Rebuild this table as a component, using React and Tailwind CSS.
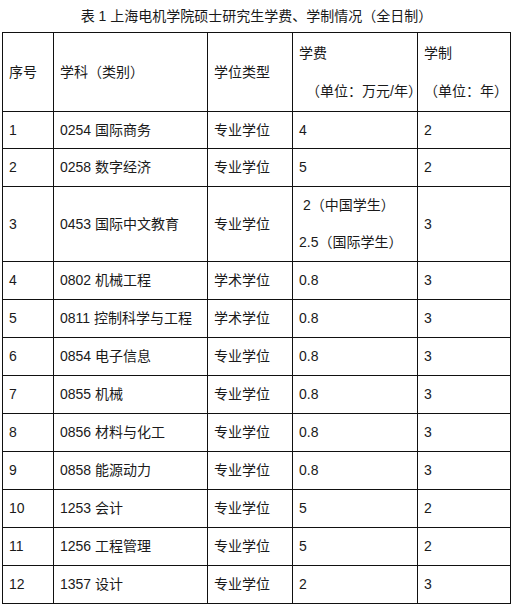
import React from "react";

const rows = [
  { no: "1", subject: "0254 国际商务", type: "专业学位", fee: ["4"], years: "2", h: "h-[37px]" },
  { no: "2", subject: "0258 数字经济", type: "专业学位", fee: ["5"], years: "2", h: "h-[38px]" },
  { no: "3", subject: "0453 国际中文教育", type: "专业学位", fee: ["\u00a02（中国学生）", "2.5（国际学生）"], years: "3", h: "h-[75px]" },
  { no: "4", subject: "0802 机械工程", type: "学术学位", fee: ["0.8"], years: "3", h: "h-[38px]" },
  { no: "5", subject: "0811 控制科学与工程", type: "学术学位", fee: ["0.8"], years: "3", h: "h-[38px]" },
  { no: "6", subject: "0854 电子信息", type: "专业学位", fee: ["0.8"], years: "3", h: "h-[38px]" },
  { no: "7", subject: "0855 机械", type: "专业学位", fee: ["0.8"], years: "3", h: "h-[38px]" },
  { no: "8", subject: "0856 材料与化工", type: "专业学位", fee: ["0.8"], years: "3", h: "h-[38px]" },
  { no: "9", subject: "0858 能源动力", type: "专业学位", fee: ["0.8"], years: "3", h: "h-[38px]" },
  { no: "10", subject: "1253 会计", type: "专业学位", fee: ["5"], years: "2", h: "h-[38px]" },
  { no: "11", subject: "1256 工程管理", type: "专业学位", fee: ["5"], years: "2", h: "h-[38px]" },
  { no: "12", subject: "1357 设计", type: "专业学位", fee: ["2"], years: "3", h: "h-[38px]" },
];

const Cell = ({ h, children }) => (
  <div className={`${h} border-l border-t border-[#111] pl-[6px] flex flex-col justify-center whitespace-nowrap`}>
    {children}
  </div>
);

export default function App() {
  return (
    <div className="w-[513px] h-[606px] bg-white text-[#1a1a1a] text-[14px] font-['Liberation_Sans','Noto_Sans_CJK_SC',sans-serif]">
      <h1 className="pt-[6px] h-[32px] leading-[20px] text-center text-[14px] font-normal">
        表 1 上海电机学院硕士研究生学费、学制情况（全日制）
      </h1>
      <div className="ml-[2px] w-[509px] grid grid-cols-[51px_154px_85px_125px_93px] border-r border-b border-[#111]">
        <Cell h="h-[79px]">序号</Cell>
        <Cell h="h-[79px]">学科（类别）</Cell>
        <Cell h="h-[79px]">学位类型</Cell>
        <Cell h="h-[79px]">
          <div className="h-[38px] flex items-center">学费</div>
          <div className="h-[38px] flex items-center pl-[7px]">（单位：万元/年）</div>
        </Cell>
        <Cell h="h-[79px]">
          <div className="h-[38px] flex items-center">学制</div>
          <div className="h-[38px] flex items-center">（单位：年）</div>
        </Cell>
        {rows.map((r) => (
          <React.Fragment key={r.no}>
            <Cell h={r.h}>{r.no}</Cell>
            <Cell h={r.h}>{r.subject}</Cell>
            <Cell h={r.h}>{r.type}</Cell>
            <Cell h={r.h}>
              {r.fee.map((f) => (
                <div key={f} className={r.fee.length > 1 ? "h-[38px] flex items-center" : ""}>
                  {f}
                </div>
              ))}
            </Cell>
            <Cell h={r.h}>{r.years}</Cell>
          </React.Fragment>
        ))}
      </div>
    </div>
  );
}
